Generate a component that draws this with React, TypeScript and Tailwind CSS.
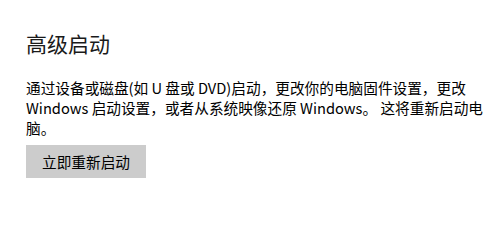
export default function App() {
  return (
    <div
      className="w-[499px] h-[205px] bg-white pl-[26px] pt-[29px] text-black overflow-hidden"
      style={{ fontFamily: '"Noto Sans CJK SC", "Noto Sans", sans-serif' }}
    >
      <h1 className="text-[21px] leading-[29px] font-normal text-[#1a1a1a]">高级启动</h1>
      <p className="mt-[20px] w-[473px] text-[14.67px] leading-[20px]">
        通过设备或磁盘(如 U 盘或 DVD)启动，更改你的电脑固件设置，更改
        <br />
        Windows 启动设置，或者从系统映像还原 Windows。 这将重新启动电
        <br />
        脑。
      </p>
      <button className="mt-[7px] h-[33px] px-[16px] bg-[#cccccc] text-[14.67px] leading-[20px] text-black">
        立即重新启动
      </button>
    </div>
  );
}
